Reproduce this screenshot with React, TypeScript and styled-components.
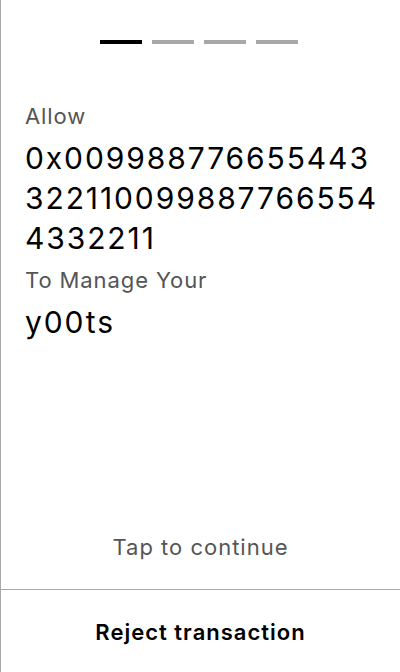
import React from "react";
import styled, { createGlobalStyle } from "styled-components";

const Global = createGlobalStyle`
  html, body { margin: 0; padding: 0; background: #fff; }
  body { font-family: Inter, "Noto Sans", sans-serif; }
`;

const Screen = styled.div`
  width: 400px;
  height: 672px;
  box-sizing: border-box;
  border-left: 1px solid #a8a8a8;
  display: flex;
  flex-direction: column;
`;

const Progress = styled.div`
  display: flex;
  justify-content: center;
  gap: 10px;
  padding-top: 40px;
  padding-right: 3px;
`;

const Bar = styled.div<{ $active?: boolean }>`
  width: 42px;
  height: 4px;
  background: ${(p) => (p.$active ? "#000" : "#a8a8a8")};
`;

const Body = styled.div`
  flex: 1;
  padding: 58px 16px 0 24px;
  display: flex;
  flex-direction: column;
  gap: 8px;
`;

const Label = styled.div`
  font-size: 22px;
  line-height: 28px;
  letter-spacing: 0.9px;
  color: #555;
`;

const Value = styled.div`
  font-size: 30px;
  line-height: 40px;
  letter-spacing: 1.9px;
  color: #000;
  word-break: break-all;
`;

const Tap = styled.div`
  text-align: center;
  font-size: 22px;
  line-height: 28px;
  letter-spacing: 1px;
  color: #555;
  padding-bottom: 28px;
`;

const Footer = styled.div`
  border-top: 1px solid #a8a8a8;
  height: 83px;
  box-sizing: border-box;
  padding-top: 1px;
  display: flex;
  align-items: center;
  justify-content: center;
  font-size: 22px;
  font-weight: 600;
  letter-spacing: 1px;
  color: #000;
`;

export default function App() {
  return (
    <>
      <Global />
      <Screen>
        <Progress>
          <Bar $active />
          <Bar />
          <Bar />
          <Bar />
        </Progress>
        <Body>
          <Label>Allow</Label>
          <Value>0x0099887766554433221100998877665544332211</Value>
          <Label>To Manage Your</Label>
          <Value>y00ts</Value>
        </Body>
        <Tap>Tap to continue</Tap>
        <Footer>Reject transaction</Footer>
      </Screen>
    </>
  );
}
